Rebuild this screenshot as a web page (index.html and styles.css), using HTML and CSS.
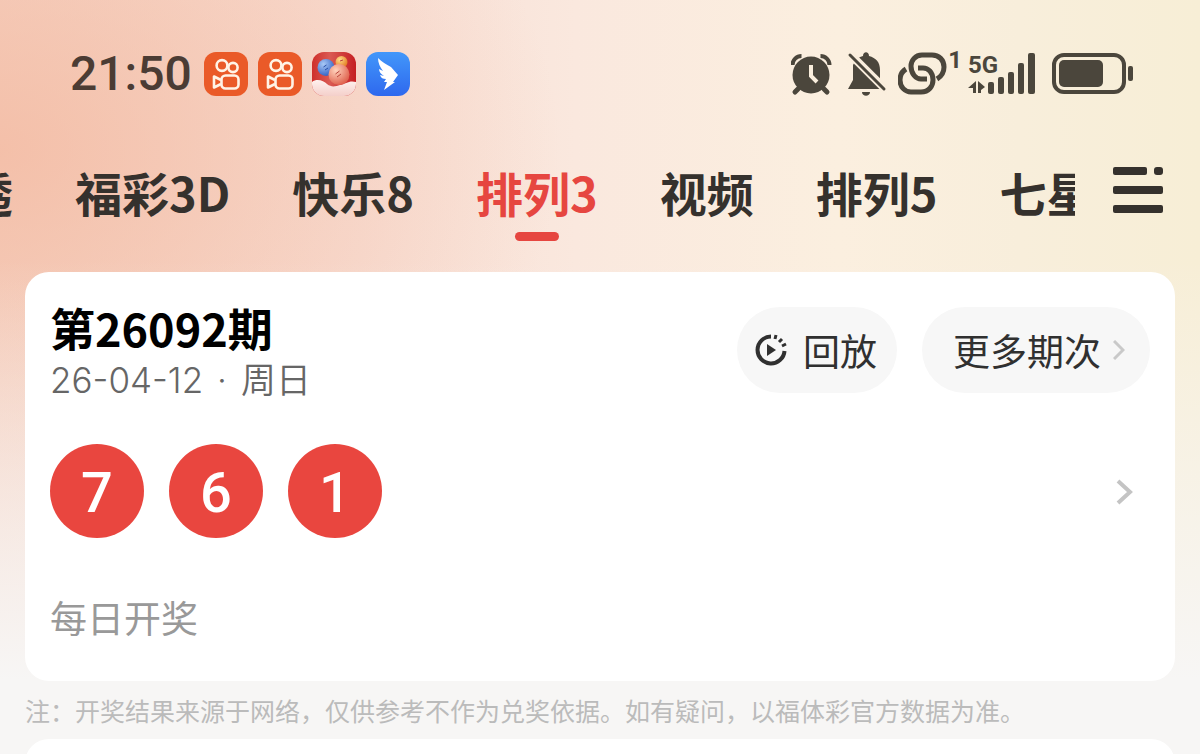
FILE: index.html
```html
<!DOCTYPE html>
<html lang="zh-CN">
<head>
    <meta charset="UTF-8">
    <meta name="viewport" content="width=device-width, initial-scale=1.0">
    <title>排列3</title>
    <link rel="stylesheet" href="styles.css">
</head>
<body>
    <svg class="defs" width="0" height="0" aria-hidden="true">
        <symbol id="kwai" viewBox="0 0 44 44">
            <rect width="44" height="44" rx="12" fill="#ea5a28"/>
            <g fill="none" stroke="#fff3e6" stroke-width="2.6" stroke-linejoin="round">
                <circle cx="18" cy="13.500" r="5.400"/>
                <circle cx="29" cy="15.500" r="4.600"/>
                <rect x="17.500" y="23.500" width="17" height="13" rx="4"/>
                <path d="M17 28l-7-3.500v11l7-3.500"/>
            </g>
        </symbol>
    </svg>

    <header class="status-bar">
        <div class="status-left">
            <span class="time">21:50</span>
            <svg class="app-icon" viewBox="0 0 44 44"><use href="#kwai"/></svg>
            <svg class="app-icon" viewBox="0 0 44 44"><use href="#kwai"/></svg>
            <svg class="app-icon" viewBox="0 0 44 44">
                <defs>
                    <clipPath id="round"><rect width="44" height="44" rx="12"/></clipPath>
                    <linearGradient id="redBg" x1="0" y1="0" x2="1" y2="0"><stop offset="0" stop-color="#cf2f2b"/><stop offset="0.400" stop-color="#da5a53"/><stop offset="1" stop-color="#c51f22"/></linearGradient>
                    <radialGradient id="blueBall" cx="0.350" cy="0.300" r="0.700"><stop offset="0" stop-color="#a9c9f6"/><stop offset="1" stop-color="#3766c6"/></radialGradient>
                    <radialGradient id="goldBall" cx="0.350" cy="0.300" r="0.700"><stop offset="0" stop-color="#ffdc8a"/><stop offset="1" stop-color="#e48026"/></radialGradient>
                    <radialGradient id="pinkBall" cx="0.350" cy="0.300" r="0.700"><stop offset="0" stop-color="#ffd3bc"/><stop offset="1" stop-color="#e06450"/></radialGradient>
                    <linearGradient id="cloud" x1="0" y1="0" x2="0" y2="1"><stop offset="0" stop-color="#fff1ee"/><stop offset="1" stop-color="#f4cfca"/></linearGradient>
                </defs>
                <g clip-path="url(#round)">
                    <rect width="44" height="44" fill="url(#redBg)"/>
                    <path d="M0 30c5-4 12-1 15 2 5 4 9 2 13 1 6-1 9-5 16-3v14H0z" fill="url(#cloud)"/>
                    <circle cx="29.500" cy="10" r="6" fill="url(#goldBall)"/>
                    <circle cx="14" cy="15.500" r="8.500" fill="url(#blueBall)"/>
                    <circle cx="27" cy="22.500" r="10.500" fill="url(#pinkBall)"/>
                    <path d="M23.500 22l4-3M25 25l4-3M28 9l3-1" stroke="#b9453c" stroke-width="1"/>
                    <path d="M11.500 15l3-2M13 18l3-2" stroke="#2a4fa6" stroke-width="1"/>
                </g>
            </svg>
            <svg class="app-icon" viewBox="0 0 44 44">
                <defs><linearGradient id="dingBg" x1="0" y1="0" x2="0" y2="1"><stop offset="0" stop-color="#4297fa"/><stop offset="1" stop-color="#2e68ee"/></linearGradient></defs>
                <rect width="44" height="44" rx="12" fill="url(#dingBg)"/>
                <path d="M12 6c4 4 8 6 13 9l7 8-5 7h2L18 38l3-8h-3l2-3c-3 0-5-1-6-4l4 1c-3-2-5-4-5-7l4 2c-3-4-5-8-5-13z" fill="#fff"/>
            </svg>
        </div>
        <div class="status-right">
            <svg class="alarm" width="42" height="44" viewBox="0 0 42 44" fill="none" stroke="#4b463c">
                <circle cx="20" cy="23" r="18.500" fill="#4b463c" stroke="none"/>
                <path d="M1.500 13c0-5 4-9 9-9M38.500 13c0-5-4-9-9-9" stroke-width="4"/>
                <path d="M7 37l-3 3M33 37l3 3" stroke-width="5" stroke-linecap="round"/>
                <path d="M20 13v11l6 6" stroke="#faeedd" stroke-width="4"/>
            </svg>
            <svg class="bell" width="40" height="44" viewBox="0 0 40 44">
                <path d="M1 37l5-9V13C9 7 12 5 16 4c0-5 6-5 6 0 7 2 11 6 11 14v13l4 6z" fill="#4b463c"/>
                <path d="M-4-3h17L-4 15z" fill="#faeedd"/>
                <path d="M15 40h8c0 5-8 5-8 0z" fill="#4b463c"/>
                <path d="M0-1l42 42" stroke="#faeedd" stroke-width="8"/>
                <path d="M3 3l34 34" stroke="#4b463c" stroke-width="3" stroke-linecap="round"/>
            </svg>
            <svg class="link" width="50" height="44" viewBox="0 0 50 44" fill="none" stroke="#4b463c" stroke-width="5">
                <path d="M8 17C3 20 2 25 2 28c0 7 5 12 11 12h10c8 0 12-6 12-12 0-8-5-12-10-12h-5"/>
                <path d="M39 27c5-3 7-8 7-12 0-7-5-12-12-12H24C17 3 13 9 13 14c0 8 5 13 10 13h6"/>
            </svg>
            <span class="link-count">1</span>
            <div class="network">
                <div class="network-type">
                    <span>5G</span>
                    <svg width="18" height="14" viewBox="0 0 18 14" fill="#4b463c"><path d="M8 1v12H5V8H0zM10 13V1l7 6-4 3v3z"/></svg>
                </div>
                <svg class="signal" width="48" height="44" viewBox="0 0 48 44" fill="#4b463c">
                    <rect x="0" y="30" width="6" height="12" rx="2"/><rect x="10" y="25" width="6" height="17" rx="2"/><rect x="20" y="20" width="6" height="22" rx="2"/><rect x="30" y="11" width="6" height="31" rx="2"/><rect x="40" y="1" width="7" height="41" rx="2"/>
                </svg>
            </div>
            <svg class="battery" width="82" height="44" viewBox="0 0 82 44">
                <rect x="2" y="3" width="70" height="37" rx="10" fill="none" stroke="#4b463c" stroke-width="4"/>
                <rect x="7" y="8" width="44" height="27" rx="5" fill="#4b463c"/>
                <rect x="76" y="14" width="5" height="15" rx="2" fill="#4b463c"/>
            </svg>
        </div>
    </header>

    <div class="nav-row">
        <nav class="tabs">
            <a class="tab" href="#">大乐透</a>
            <a class="tab" href="#">福彩3D</a>
            <a class="tab" href="#">快乐8</a>
            <a class="tab active" href="#">排列3</a>
            <a class="tab" href="#">视频</a>
            <a class="tab" href="#">排列5</a>
            <a class="tab" href="#">七星彩</a>
        </nav>
        <button class="menu" type="button" aria-label="菜单">
            <svg width="52" height="48" viewBox="0 0 52 48" fill="#35312d">
                <rect x="1" y="1" width="34" height="8" rx="2"/><rect x="42" y="1" width="9" height="8" rx="3"/><rect x="1" y="20" width="50" height="8" rx="2"/><rect x="1" y="39" width="50" height="8" rx="2"/>
            </svg>
        </button>
    </div>

    <main>
        <section class="card">
            <div class="card-head">
                <div class="issue">
                    <h1>第26092期</h1>
                    <p class="date"><span>26-04-12</span><span>·</span><span>周日</span></p>
                </div>
                <div class="actions">
                    <button class="pill replay" type="button">
                        <svg width="32" height="32" viewBox="0 0 32 32" fill="none" stroke="#303030">
                            <path d="M16 2.500A13.500 13.500 0 1 0 29.500 17" stroke-width="4"/>
                            <path d="M20 5l1-4M24 8l3-3M27 12l4-2" stroke-width="3"/>
                            <path d="M12 10v12l9-6z" fill="#303030" stroke="none"/>
                        </svg>
                        回放
                    </button>
                    <button class="pill more" type="button">
                        更多期次
                        <svg width="12" height="20" viewBox="0 0 12 20" fill="none" stroke="#c9c9c9" stroke-width="3"><path d="M1 1l9 9-9 9"/></svg>
                    </button>
                </div>
            </div>
            <a class="result" href="#" aria-label="开奖详情">
                <span class="ball">7</span>
                <span class="ball">6</span>
                <span class="ball">1</span>
                <svg class="arrow" width="18" height="28" viewBox="0 0 18 28" fill="none" stroke="#c4c4c4" stroke-width="4"><path d="M2 4l12 11L2 26"/></svg>
            </a>
            <p class="schedule">每日开奖</p>
        </section>
        <p class="note">注：开奖结果来源于网络，仅供参考不作为兑奖依据。如有疑问，以福体彩官方数据为准。</p>
        <section class="card next"></section>
    </main>
</body>
</html>
```
FILE: styles.css
```css
* {
    box-sizing: border-box;
}
body {
    margin: 0;
    min-height: 100vh;
    overflow: hidden;
    font-family: "Noto Sans CJK SC", sans-serif;
    color: #35312d;
    background:
        linear-gradient(to bottom, rgba(247, 246, 245, 0) 260px, #f7f6f5 680px),
        radial-gradient(ellipse 560px 420px at 0 150px, rgba(243, 182, 156, 0.7), rgba(244, 190, 170, 0)),
        linear-gradient(to right, #f6d6c8 0, #f8dfd5 30%, #fae8de 48%, #fbefdf 70%, #f8eedb 85%, #f7eed6 100%);
}
h1, p {
    margin: 0;
}
a {
    color: inherit;
    text-decoration: none;
}
button {
    border: none;
    padding: 0;
    font-family: inherit;
    color: inherit;
    cursor: pointer;
}
svg {
    display: block;
    flex: none;
}
.defs {
    position: absolute;
}

/* status bar */
.status-bar {
    display: flex;
    justify-content: space-between;
    height: 148px;
    padding: 50px 66px 0 70px;
}
.status-left,
.status-right {
    display: flex;
    align-items: center;
    height: 48px;
}
.status-left {
    gap: 10px;
}
.time {
    margin-right: 2px;
    font-family: Roboto, sans-serif;
    font-size: 48px;
    font-weight: 500;
    line-height: 48px;
    color: #4b3c34;
}
.app-icon {
    width: 44px;
    height: 44px;
}
.status-right {
    color: #4b463c;
    font-family: Roboto, sans-serif;
    font-weight: 700;
}
.bell {
    margin-left: 14px;
}
.link {
    margin-left: 11px;
}
.link-count {
    align-self: flex-start;
    font-size: 24px;
    line-height: 20px;
}
.network {
    display: flex;
    margin: 0 16px 0 6px;
}
.network-type {
    width: 20px;
    font-size: 24px;
    line-height: 26px;
}
.network-type svg {
    margin-top: 2px;
}

/* tabs */
.nav-row {
    display: flex;
    align-items: flex-start;
    justify-content: space-between;
    height: 124px;
    padding-right: 36px;
}
.tabs {
    display: flex;
    gap: 62px;
    flex: 1;
    min-width: 0;
    margin-right: 37px;
    overflow: hidden;
}
.tab {
    flex: none;
    height: 93px;
    padding-top: 12px;
    font-size: 47px;
    font-weight: 700;
    line-height: 64px;
    white-space: nowrap;
}
.tab:first-child {
    margin-left: -128px;
}
.tab.active {
    color: #e64640;
}
.tab.active::after {
    content: "";
    display: block;
    width: 44px;
    height: 9px;
    margin: 8px auto 0;
    border-radius: 5px;
    background: #e64640;
}
.menu {
    margin-top: 18px;
    background: none;
}

/* result card */
main {
    padding: 0 25px;
}
.card {
    padding: 32px 25px 38px;
    border-radius: 24px;
    background: #fff;
}
.card-head {
    display: flex;
    justify-content: space-between;
}
h1 {
    font-size: 45px;
    font-weight: 700;
    line-height: 48px;
    color: #000;
}
.date {
    display: flex;
    gap: 14px;
    font-family: Inter, "Noto Sans CJK SC", sans-serif;
    font-size: 35px;
    font-weight: 350;
    line-height: 56px;
    color: #666;
}
.actions {
    display: flex;
    gap: 25px;
    padding-top: 3px;
}
.pill {
    display: flex;
    align-items: center;
    height: 86px;
    border-radius: 43px;
    background: #f7f7f7;
    font-size: 37px;
    color: #303030;
}
.replay {
    gap: 16px;
    padding: 0 20px 0 18px;
}
.more {
    gap: 12px;
    padding: 0 25px 0 31px;
}
.result {
    display: flex;
    align-items: center;
    gap: 25px;
    margin-top: 36px;
}
.ball {
    width: 94px;
    height: 94px;
    border-radius: 50%;
    background: #e9463f;
    color: #fff;
    font-family: Roboto, sans-serif;
    font-size: 56px;
    font-weight: 500;
    line-height: 98px;
    text-align: center;
}
.arrow {
    margin: 0 16px 0 auto;
}
.schedule {
    margin-top: 53px;
    font-size: 37px;
    line-height: 52px;
    color: #999;
}
.note {
    font-size: 25px;
    line-height: 58px;
    color: #bbb;
    white-space: nowrap;
}
.card.next {
    height: 80px;
    margin-bottom: -66px;
}
```
